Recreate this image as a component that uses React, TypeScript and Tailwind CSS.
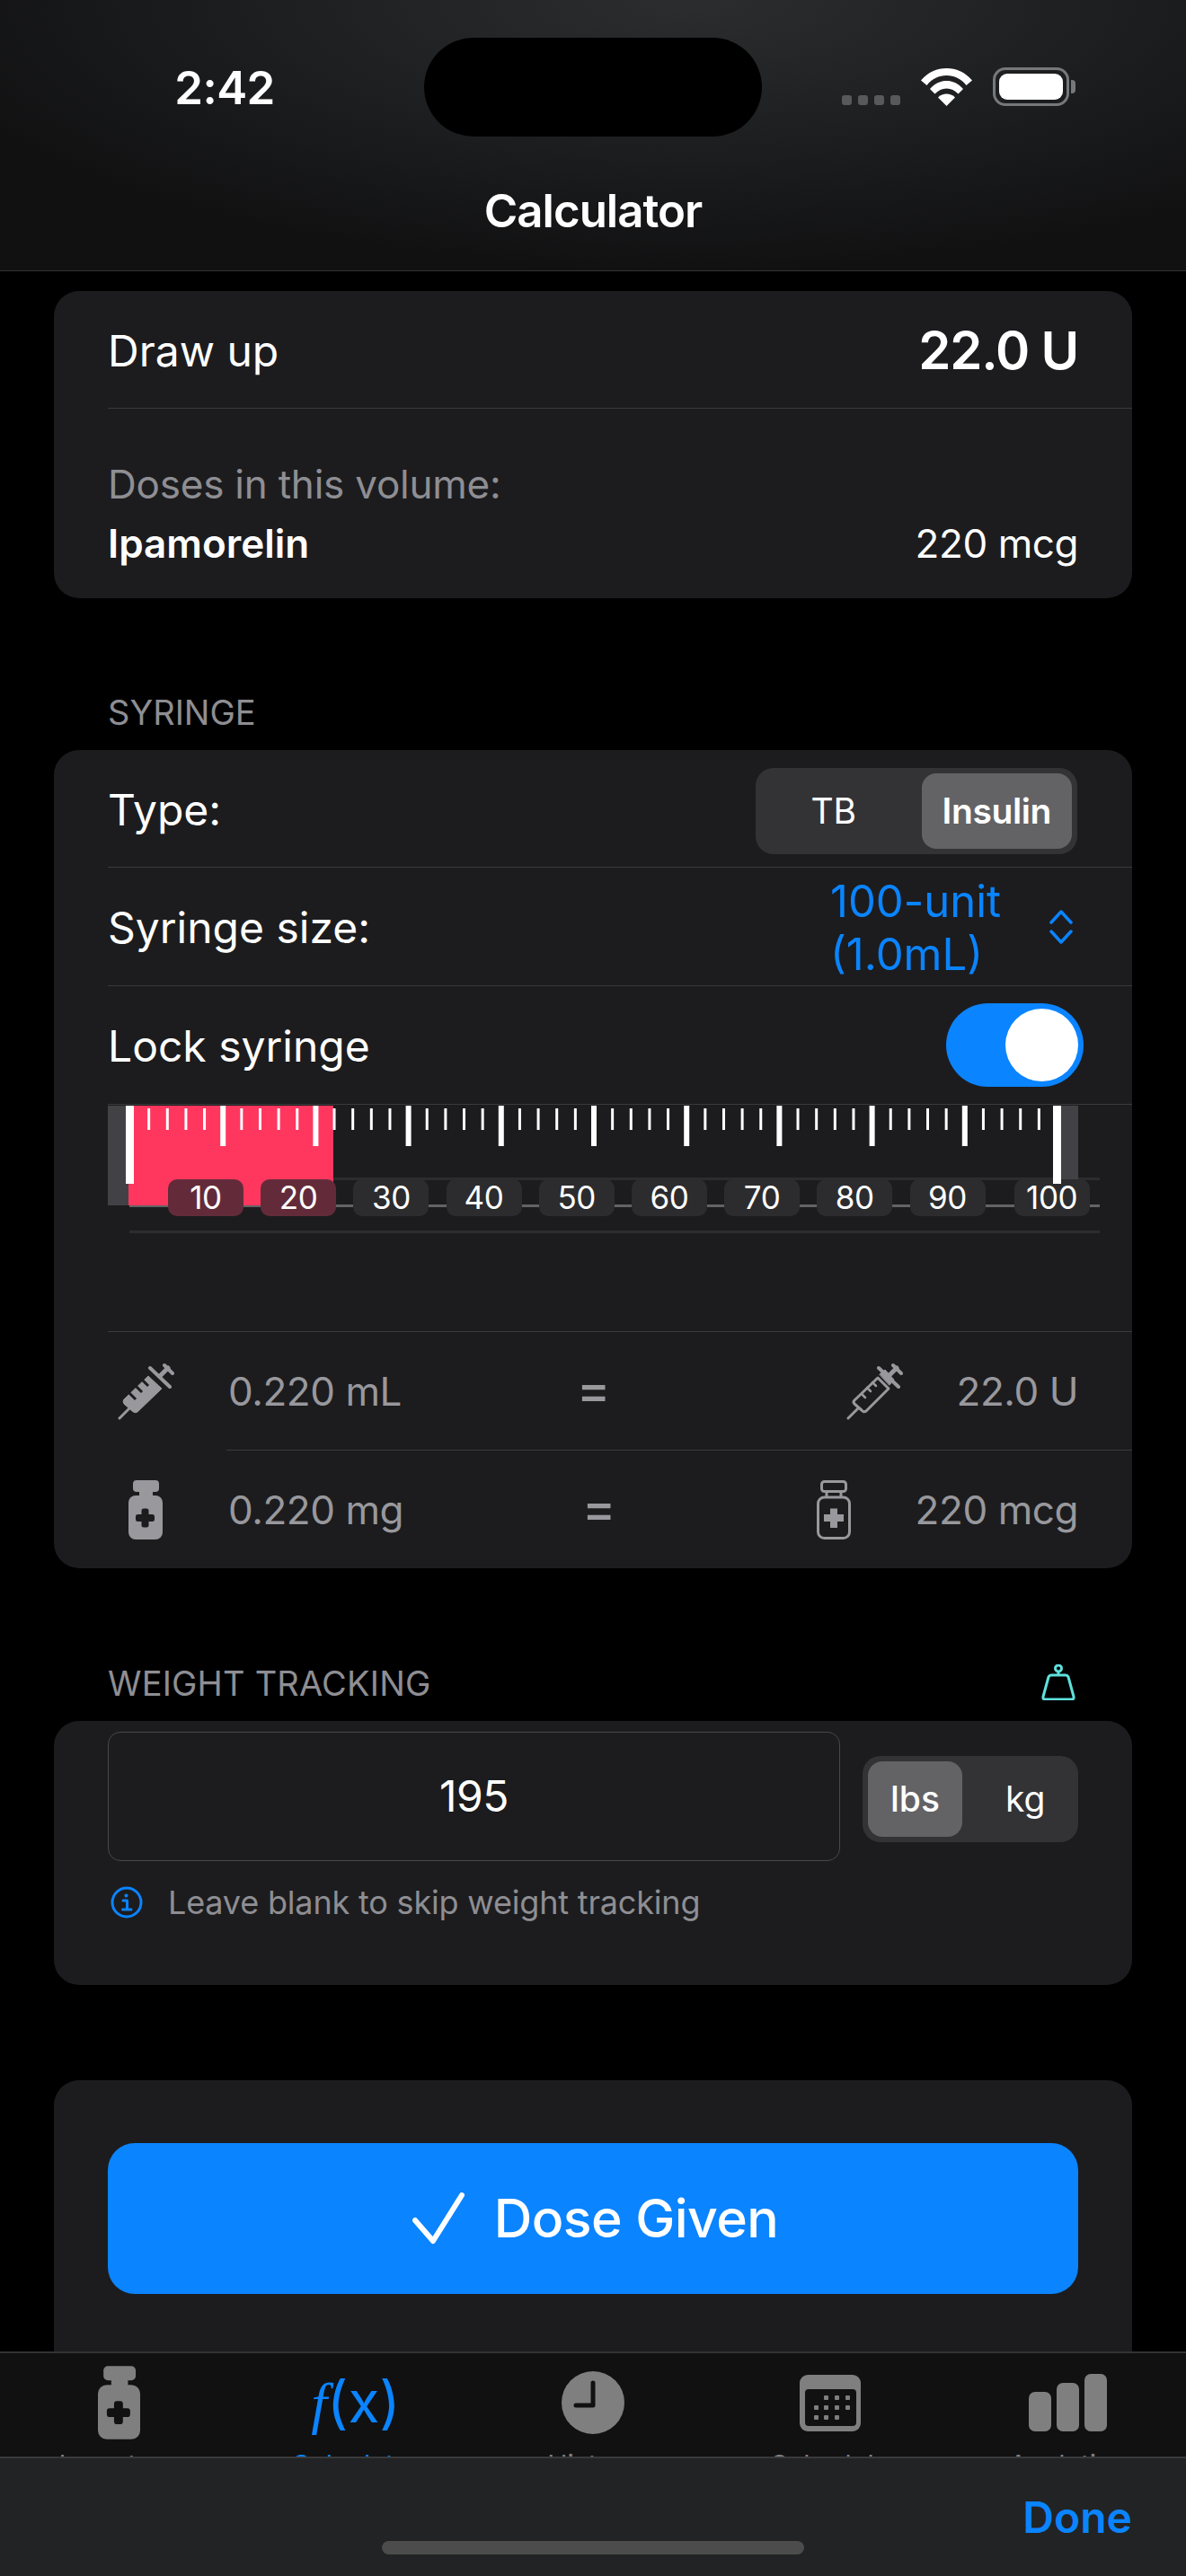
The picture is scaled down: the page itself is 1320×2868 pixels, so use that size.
import React from 'react';

const font = "font-['Inter','Liberation_Sans',sans-serif]";

function Sep({ inset = 'ml-[60px]' }: { inset?: string }) {
  return <div className={`h-px bg-[#3a3a3c] ${inset}`} />;
}

function Wifi() {
  return (
    <svg width="57" height="42" viewBox="0 0 57 42" fill="#fff">
      <path d="M28.500 0C39 0 49 4 57 13.500L50.500 19C44.500 11.500 37 8 28.500 8S12.500 11.500 6.500 19L0 13.500C8 4 18 0 28.500 0Z" />
      <path d="M28.500 14C35 14 41 16.500 47 23L41.500 28.500C37.500 24.500 33.500 22.500 28.500 22.500S19.500 24.500 15.500 28.500L10 23C16 16.500 22 14 28.500 14Z" />
      <path d="M28.500 28.500C32 28.500 35 29.500 38 32.500L28.500 42L19 32.500C22 29.500 25 28.500 28.500 28.500Z" />
    </svg>
  );
}

function Battery() {
  return (
    <div className="flex items-center gap-[2px]">
      <div className="w-[85px] h-[43px] rounded-[14px] border-[3px] border-[#77787a] p-[4px]">
        <div className="w-full h-full rounded-[9px] bg-white" />
      </div>
      <div className="w-[5px] h-[15px] rounded-r-[4px] bg-[#77787a]" />
    </div>
  );
}

function Syringe({ solid }: { solid?: boolean }) {
  return (
    <svg width="64" height="64" viewBox="0 0 64 64" fill="none" stroke="#98989d" strokeLinecap="round" strokeLinejoin="round" className="shrink-0">
      <path d="M3 62L14 51" strokeWidth="3" />
      {solid ? (
        <>
          <path d="M8 41L35 15L50 29L23 55Q20 57 17 54L8 46Q6 43 8 41Z" fill="#98989d" strokeWidth="1" />
          <path d="M13 33L21 41M21 26L28 33M28 19L35 26" stroke="#1c1c1e" strokeWidth="3" strokeLinecap="butt" />
        </>
      ) : (
        <>
          <path d="M10 42L36 17L48 29L23 54Q20 56 18 53L10 46Q8 44 10 42Z" strokeWidth="3" />
          <path d="M18 35L22 39M24 28L28 32M30 22L34 26" strokeWidth="2.500" />
          <path d="M38 13L44 8L54 19L49 25Z" fill="#98989d" strokeWidth="1" />
        </>
      )}
      <path d="M37 6L59 27" strokeWidth="4" />
      <path d="M48 15L57 6" strokeWidth="5" />
      <path d="M53 3L62 12" strokeWidth="4" />
    </svg>
  );
}

function Vial({ solid, color = '#98989d', bg = '#1c1c1e', size = 'w-[38px] h-[66px]' }: { solid?: boolean; color?: string; bg?: string; size?: string }) {
  if (solid) {
    return (
      <svg className={`${size} shrink-0`} viewBox="0 0 38 66">
        <rect x="5" y="0" width="29" height="13" rx="4" fill={color} />
        <rect x="12" y="11" width="15" height="8" fill={color} />
        <rect x="0" y="17" width="38" height="49" rx="8" fill={color} />
        <path d="M14.500 34Q14.500 31.500 17 31.500H20Q22.500 31.500 22.500 34V38H26.500Q29 38 29 40.500V43.500Q29 46 26.500 46H22.500V50Q22.500 52.500 20 52.500H17Q14.500 52.500 14.500 50V46H10.500Q8 46 8 43.500V40.500Q8 38 10.500 38H14.500Z" fill={bg} />
      </svg>
    );
  }
  return (
    <svg className={`${size} shrink-0`} viewBox="0 0 38 66" fill="none" stroke={color} strokeWidth="3">
      <rect x="5.500" y="1.500" width="27" height="11" rx="3" />
      <path d="M11 12.500V19M27 12.500V19" />
      <rect x="1.500" y="19" width="35" height="45.500" rx="7" />
      <path d="M15 31.500H23V38H30V46H23V53H15V46H8V38H15Z" fill={color} stroke="none" />
    </svg>
  );
}

function Ruler() {
  const left = 145;
  const step = 20.64;
  const ticks = Array.from({ length: 51 }, (_, i) => i * 2);
  const labels = [10, 20, 30, 40, 50, 60, 70, 80, 90, 100];
  return (
    <div className="relative h-[252px]">
      <svg className="absolute left-0 top-0" width="1200" height="252" viewBox="60 1230 1200 252">
        <rect x="371" y="1311" width="853" height="3" fill="#2c2c2e" />
        <rect x="144" y="1341" width="1080" height="3" fill="#636366" />
        <rect x="144" y="1370" width="1080" height="3" fill="#2c2c2e" />
        <rect x="120" y="1231" width="23" height="111" fill="#424246" />
        <rect x="1181" y="1231" width="19" height="98" fill="#424246" />
        <rect x="143" y="1231" width="228" height="111" fill="#ff375f" />
        {ticks.map((u) => {
          const x = left + (u / 2) * step;
          if (u === 0 || u === 100) {
            const ex = u === 0 ? 140 : 1172;
            return <rect key={u} x={ex} y="1231" width="9" height="87" fill="#fff" />;
          }
          if (u % 10 === 0) return <rect key={u} x={x - 3} y="1231" width="6" height="45" fill="#fff" />;
          return <rect key={u} x={x - 1.500} y="1234" width="3" height="24" fill="#fff" />;
        })}
      </svg>
      <div className="absolute left-[127px] top-[83px] flex gap-[19.200px]">
        {labels.map((n) => (
          <div
            key={n}
            className={`w-[84px] h-[41px] rounded-[10px] flex items-center justify-center text-[35px] tracking-[-0.01em] text-white ${n <= 20 ? 'bg-[#632b3a]' : 'bg-[#2c2c2e]'} ${n === 100 ? 'ml-[13px]' : ''}`}
          >
            {n}
          </div>
        ))}
      </div>
      <div className="absolute left-[1112px] top-[83px] w-[9px] h-[5px] bg-white" />
    </div>
  );
}

function Tab({ label, color, children }: { label: string; color: string; children: React.ReactNode }) {
  return (
    <div className="w-[264px] h-full flex flex-col items-center overflow-hidden">
      <div className="h-[110px] shrink-0 flex items-center justify-center">{children}</div>
      <span className={`shrink-0 text-[30px] leading-none -mt-[1px] ${color}`}>{label}</span>
    </div>
  );
}

export default function App() {
  return (
    <div className={`w-[1320px] h-[2868px] bg-black flex flex-col overflow-hidden ${font}`}>
      <header className="h-[302px] shrink-0 border-b border-[#333336] bg-[radial-gradient(ellipse_900px_300px_at_58%_0%,#2b2d2f,#111112)] relative">
        <div className="h-[205px] flex items-start">
          <span className="w-[500px] pt-[68px] text-center text-[51px] leading-[60px] font-semibold tracking-[-0.01em] text-white">2:42</span>
        </div>
        <div className="absolute left-[472px] top-[42px] w-[376px] h-[110px] rounded-full bg-black" />
        <div className="absolute left-[937px] top-[75px] flex items-end">
          <div className="flex gap-[7px] mb-[1px]">
            {[0, 1, 2, 3].map((i) => (
              <div key={i} className="w-[11px] h-[11px] rounded-[3px] bg-[#58595a]" />
            ))}
          </div>
          <div className="ml-[23px]"><Wifi /></div>
          <div className="ml-[23px]"><Battery /></div>
        </div>
        <div className="text-center text-[51px] leading-[60px] font-semibold tracking-[-0.02em] text-white">Calculator</div>
      </header>

      <main className="flex-1 min-h-0 overflow-hidden px-[60px] pt-[22px]">
        <section className="h-[342px] rounded-[28px] bg-[#1c1c1e] text-white">
          <div className="h-[130px] px-[60px] flex items-center justify-between">
            <span className="text-[48px] mt-[3px]">Draw up</span>
            <span className="text-[58px] font-semibold tracking-[-0.02em] mt-[2px]">22.0 U</span>
          </div>
          <Sep />
          <div className="px-[60px] pt-[57px]">
            <div className="text-[44px] leading-[54px] tracking-[-0.005em] text-[#8e8e93]">Doses in this volume:</div>
            <div className="flex justify-between items-center text-[44px] leading-[54px] mt-[12px]">
              <span className="font-semibold">Ipamorelin</span>
              <span className="tracking-[-0.01em]">220 mcg</span>
            </div>
          </div>
        </section>

        <div className="h-[169px] px-[60px] pt-[105px] text-[38px] leading-[44px] text-[#8e8e93]">SYRINGE</div>
        <section className="h-[911px] rounded-[28px] bg-[#1c1c1e] text-white">
          <div className="h-[130px] pl-[60px] pr-[61px] flex items-center justify-between">
            <span className="text-[48px] mt-[3px]">Type:</span>
            <div className="w-[358px] h-[96px] mt-[6px] rounded-[20px] bg-[#333336] flex items-center p-[6px] text-[39px]">
              <div className="w-[162px] mr-[17px] text-center">TB</div>
              <div className="w-[168px] h-[84px] rounded-[16px] bg-[#636366] flex items-center justify-center font-semibold tracking-[-0.01em]">Insulin</div>
            </div>
          </div>
          <Sep />
          <div className="h-[131px] pl-[60px] pr-[66px] flex items-center justify-between">
            <span className="text-[48px] mt-[3px]">Syringe size:</span>
            <div className="flex items-center text-[#0a84ff]">
              <div className="w-[244px] text-[49px] leading-[59px] mt-[2px]">
                <div>100-unit</div>
                <div>(1.0mL)</div>
              </div>
              <svg width="26" height="38" viewBox="0 0 26 38" fill="none" stroke="#0a84ff" strokeWidth="3.500" strokeLinecap="round" strokeLinejoin="round">
                <path d="M2 14L13 2L24 14M2 24L13 36L24 24" />
              </svg>
            </div>
          </div>
          <Sep />
          <div className="h-[131px] pl-[60px] pr-[54px] flex items-center justify-between">
            <span className="text-[48px] mt-[3px]">Lock syringe</span>
            <div className="w-[153px] h-[93px] rounded-full bg-[#0a84ff] flex items-center justify-end p-[6px]">
              <div className="w-[81px] h-[81px] rounded-full bg-white" />
            </div>
          </div>
          <Sep />
          <Ruler />
          <Sep />
          <div className="h-[131px] pl-[70px] pr-[60px] flex items-center text-[44px] tracking-[-0.01em] text-[#98989d]">
            <Syringe solid />
            <span className="ml-[60px] w-[388px]">0.220 mL</span>
            <span className="text-[56px] leading-none font-medium -mt-[4px]">=</span>
            <div className="flex-1 flex items-center justify-end gap-[60px]">
              <Syringe />
              <span>22.0 U</span>
            </div>
          </div>
          <Sep inset="ml-[192px]" />
          <div className="h-[131px] pl-[83px] pr-[60px] flex items-center text-[44px] tracking-[-0.01em] text-[#98989d]">
            <Vial solid />
            <span className="ml-[73px] w-[394px]">0.220 mg</span>
            <span className="text-[56px] leading-none font-medium -mt-[4px]">=</span>
            <div className="flex-1 flex items-center justify-end gap-[72px]">
              <Vial />
              <span>220 mcg</span>
            </div>
          </div>
        </section>

        <div className="h-[170px] pl-[60px] pr-[63px] pt-[106px] flex justify-between items-start text-[38px] leading-[44px] tracking-[0.005em] text-[#8e8e93]">
          <span>WEIGHT TRACKING</span>
          <svg width="38" height="40" viewBox="0 0 38 40" fill="none" stroke="#5fe0dc" strokeWidth="3" className="mt-[1px]">
            <circle cx="19" cy="4.500" r="3.500" />
            <path d="M19 8V12M11 12H27Q29 12 30 14L36 36Q36.500 39 34 39H4Q1.500 39 2 36L8 14Q9 12 11 12Z" strokeLinejoin="round" />
          </svg>
        </div>
        <section className="h-[294px] rounded-[28px] bg-[#1c1c1e] text-white px-[60px] pt-[12px]">
          <div className="flex items-center">
            <div className="w-[815px] h-[144px] rounded-[14px] border border-[#48484a] flex items-center justify-center text-[48px] tracking-[-0.01em]">195</div>
            <div className="ml-[25px] mt-[6px] w-[240px] h-[96px] rounded-[20px] bg-[#333336] flex items-center p-[6px] text-[39px]">
              <div className="w-[105px] h-[84px] rounded-[16px] bg-[#636366] flex items-center justify-center font-medium">lbs</div>
              <div className="pl-[48px]">kg</div>
            </div>
          </div>
          <div className="mt-[19px] flex items-center text-[36px] tracking-[-0.005em] text-[#8e8e93]">
            <svg width="36" height="36" viewBox="0 0 36 36" fill="none" stroke="#0a84ff" strokeWidth="3" className="ml-[3px] shrink-0">
              <circle cx="18" cy="18" r="16" />
              <circle cx="17.500" cy="10.500" r="2" fill="#0a84ff" stroke="none" />
              <path d="M14 16H18.500V26M13.500 26H23" strokeLinecap="round" strokeLinejoin="round" />
            </svg>
            <span className="ml-[28px]">Leave blank to skip weight tracking</span>
          </div>
        </section>

        <section className="mt-[106px] h-[340px] rounded-[28px] bg-[#1c1c1e] px-[60px] pt-[70px]">
          <button className="w-full h-[168px] pl-[5px] rounded-[30px] bg-[#0a84ff] flex items-center justify-center text-[59px] font-medium tracking-[-0.01em] text-white">
            <svg width="58" height="58" viewBox="0 0 58 58" fill="none" stroke="#fff" strokeWidth="6" strokeLinecap="round" strokeLinejoin="round" className="mr-[33px]">
              <path d="M3 31L23 54L55 3" />
            </svg>
            Dose Given
          </button>
        </section>
      </main>

      <nav className="h-[117px] shrink-0 bg-[#111112] border-t-[2px] border-[#333336] flex">
        <Tab label="Inventory" color="text-[#7f7f7f]"><Vial solid color="#7f7f7f" bg="#111112" size="w-[47px] h-[82px]" /></Tab>
        <Tab label="Calculator" color="text-[#0a84ff]">
          <span className="font-['Liberation_Serif',serif] italic text-[#0a84ff] text-[64px] leading-none">f<span className="font-['Inter',sans-serif] not-italic">(x)</span></span>
        </Tab>
        <Tab label="History" color="text-[#7f7f7f]">
          <svg width="70" height="70" viewBox="0 0 70 70"><circle cx="35" cy="35" r="35" fill="#7f7f7f" /><path d="M35 13V38H16" fill="none" stroke="#111112" strokeWidth="5" strokeLinecap="round" strokeLinejoin="round" /></svg>
        </Tab>
        <Tab label="Schedule" color="text-[#7f7f7f]">
          <svg width="68" height="63" viewBox="0 0 68 63"><rect width="68" height="63" rx="9" fill="#7f7f7f" /><rect x="6" y="16" width="57" height="41" rx="4" fill="#111112" /><g fill="#7f7f7f">{[[27, 23], [39, 23], [51, 23], [16, 34], [27, 34], [39, 34], [51, 34], [16, 45], [27, 45], [39, 45]].map(([x, y]) => <rect key={`${x}-${y}`} x={x} y={y} width="5" height="5" rx="1" />)}</g></svg>
        </Tab>
        <Tab label="Analytics" color="text-[#7f7f7f]">
          <svg width="87" height="64" viewBox="0 0 87 64" fill="#7f7f7f"><rect x="0" y="20" width="25" height="44" rx="7" /><rect x="31" y="10" width="25" height="54" rx="7" /><rect x="62" y="0" width="25" height="64" rx="7" /></svg>
        </Tab>
      </nav>

      <footer className="h-[133px] shrink-0 relative bg-[#222324] border-t-[2px] border-[#3a3a3c]">
        <div className="pr-[60px] pt-[36px] text-right text-[48px] leading-[60px] font-semibold text-[#0a84ff]">Done</div>
        <div className="absolute left-[425px] top-[92px] w-[470px] h-[15px] rounded-full bg-[#4c4c4c]" />
      </footer>
    </div>
  );
}
